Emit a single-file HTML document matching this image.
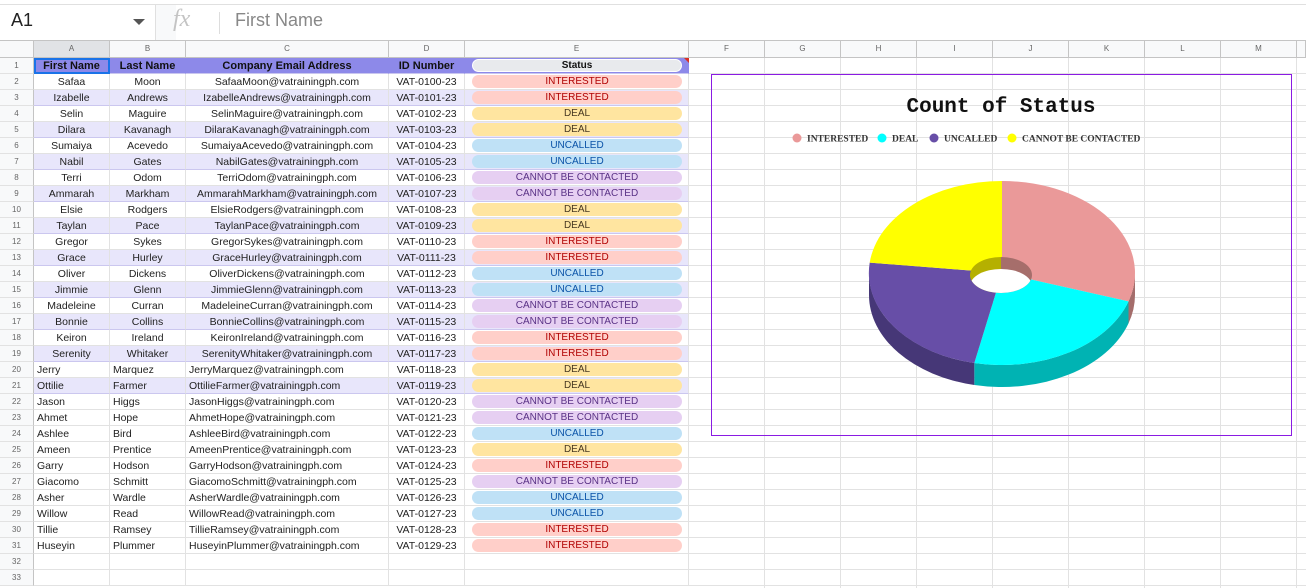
<!DOCTYPE html>
<html><head><meta charset="utf-8"><style>
*{box-sizing:border-box;margin:0;padding:0}
body{width:1306px;height:588px;overflow:hidden;background:#fff;font-family:"Liberation Sans",sans-serif;position:relative}
#top{position:absolute;left:0;width:1306px;border-top:1px solid #e0e0e0;border-bottom:1px solid #c4c4c4;top:4px;height:37px}
.r{position:absolute;left:0;display:flex;height:16px;width:689px}
.r>div{flex:none;border-right:1px solid #e2e2e2;border-bottom:1px solid #e2e2e2;font-size:10.5px;line-height:16px;white-space:nowrap;overflow:hidden;color:#222}
.n{width:34px;background:#f8f9fa;color:#666 !important;font-size:8px !important;text-align:center;border-right:1px solid #c4c4c4 !important}
.a{width:76px}.b{width:76px}.c{width:203px}.d{width:76px}.e{width:224px;padding:1px 6px 0 7px}.f{width:76px}.z{width:9px}
.ce>div.a,.ce>div.b,.ce>div.c{text-align:center}
.le>div.a,.le>div.b,.le>div.c{padding-left:3px}
.d{text-align:center}
.band>div:not(.n){background:#e8e6fb;border-bottom-color:#cbc7ef}
.p{height:13px;border-radius:7px;text-align:center;font-size:10px;line-height:13px}
.I{background:#ffcfc9;color:#b10202}
.D{background:#ffe5a0;color:#473821}
.U{background:#bfe1f6;color:#0a53a8}
.C{background:#e6cff2;color:#5a3286}
.hd{width:1306px}
.hd>div{background:#f8f9fa;color:#666;font-size:8px;text-align:center;border-bottom:1px solid #c4c4c4;border-right:1px solid #c4c4c4;line-height:16px}
.h1>div:not(.n){background:#8d89e9;font-weight:bold;font-size:11px;text-align:center;color:#111;border-right-color:#8d89e9;border-bottom-color:#c9c6ef}
</style></head><body>
<div id="top"></div>
<div style="position:absolute;left:11px;top:10px;font-size:18px;color:#222">A1</div>
<div style="position:absolute;left:133px;top:19px;width:0;height:0;border-left:6px solid transparent;border-right:6px solid transparent;border-top:6px solid #555"></div>
<div style="position:absolute;left:155px;top:5px;width:1px;height:35px;background:#e0e0e0"></div>
<div style="position:absolute;left:156px;top:5px;width:20px;height:35px;background:#f8f9fa"></div>
<div style="position:absolute;left:173px;top:6px;font-family:'Liberation Serif',serif;font-style:italic;font-size:24px;color:#c4c4c4">fx</div>
<div style="position:absolute;left:219px;top:12px;width:1px;height:22px;background:#ddd"></div>
<div style="position:absolute;left:235px;top:10px;font-size:18px;color:#888">First Name</div>

<!-- grid lines for F-M area -->
<div style="position:absolute;left:689px;top:58px;width:617px;height:530px;background:
repeating-linear-gradient(to bottom,transparent 0 15px,#e2e2e2 15px 16px),
repeating-linear-gradient(to right,transparent 0 75px,#e2e2e2 75px 76px)"></div>

<div class="r hd" style="top:41px;height:17px"><div class="n" style="border-bottom:1px solid #c4c4c4"></div><div class="a" style="background:#e1e3e6">A</div><div class="b">B</div><div class="c">C</div><div class="d">D</div><div class="e" style="padding:0">E</div><div class="f">F</div><div class="f">G</div><div class="f">H</div><div class="f">I</div><div class="f">J</div><div class="f">K</div><div class="f">L</div><div class="f">M</div><div class="z"></div></div>

<div class="r h1" style="top:58px"><div class="n">1</div><div class="a" style="outline:2px solid #1a73e8;outline-offset:-2px">First Name</div><div class="b">Last Name</div><div class="c">Company Email Address</div><div class="d">ID Number</div><div class="e"><div class="p" style="background:#e8eaed;width:210px;border:1px solid #fff;line-height:11px">Status</div></div></div>
<div style="position:absolute;left:684px;top:58px;width:0;height:0;border-left:5px solid transparent;border-top:5px solid #d93025"></div>

<div class="r ce" style="top:74px"><div class="n">2</div><div class="a">Safaa</div><div class="b">Moon</div><div class="c">SafaaMoon@vatrainingph.com</div><div class="d">VAT-0100-23</div><div class="e"><div class="p I">INTERESTED</div></div></div>
<div class="r ce band" style="top:90px"><div class="n">3</div><div class="a">Izabelle</div><div class="b">Andrews</div><div class="c">IzabelleAndrews@vatrainingph.com</div><div class="d">VAT-0101-23</div><div class="e"><div class="p I">INTERESTED</div></div></div>
<div class="r ce" style="top:106px"><div class="n">4</div><div class="a">Selin</div><div class="b">Maguire</div><div class="c">SelinMaguire@vatrainingph.com</div><div class="d">VAT-0102-23</div><div class="e"><div class="p D">DEAL</div></div></div>
<div class="r ce band" style="top:122px"><div class="n">5</div><div class="a">Dilara</div><div class="b">Kavanagh</div><div class="c">DilaraKavanagh@vatrainingph.com</div><div class="d">VAT-0103-23</div><div class="e"><div class="p D">DEAL</div></div></div>
<div class="r ce" style="top:138px"><div class="n">6</div><div class="a">Sumaiya</div><div class="b">Acevedo</div><div class="c">SumaiyaAcevedo@vatrainingph.com</div><div class="d">VAT-0104-23</div><div class="e"><div class="p U">UNCALLED</div></div></div>
<div class="r ce band" style="top:154px"><div class="n">7</div><div class="a">Nabil</div><div class="b">Gates</div><div class="c">NabilGates@vatrainingph.com</div><div class="d">VAT-0105-23</div><div class="e"><div class="p U">UNCALLED</div></div></div>
<div class="r ce" style="top:170px"><div class="n">8</div><div class="a">Terri</div><div class="b">Odom</div><div class="c">TerriOdom@vatrainingph.com</div><div class="d">VAT-0106-23</div><div class="e"><div class="p C">CANNOT BE CONTACTED</div></div></div>
<div class="r ce band" style="top:186px"><div class="n">9</div><div class="a">Ammarah</div><div class="b">Markham</div><div class="c">AmmarahMarkham@vatrainingph.com</div><div class="d">VAT-0107-23</div><div class="e"><div class="p C">CANNOT BE CONTACTED</div></div></div>
<div class="r ce" style="top:202px"><div class="n">10</div><div class="a">Elsie</div><div class="b">Rodgers</div><div class="c">ElsieRodgers@vatrainingph.com</div><div class="d">VAT-0108-23</div><div class="e"><div class="p D">DEAL</div></div></div>
<div class="r ce band" style="top:218px"><div class="n">11</div><div class="a">Taylan</div><div class="b">Pace</div><div class="c">TaylanPace@vatrainingph.com</div><div class="d">VAT-0109-23</div><div class="e"><div class="p D">DEAL</div></div></div>
<div class="r ce" style="top:234px"><div class="n">12</div><div class="a">Gregor</div><div class="b">Sykes</div><div class="c">GregorSykes@vatrainingph.com</div><div class="d">VAT-0110-23</div><div class="e"><div class="p I">INTERESTED</div></div></div>
<div class="r ce band" style="top:250px"><div class="n">13</div><div class="a">Grace</div><div class="b">Hurley</div><div class="c">GraceHurley@vatrainingph.com</div><div class="d">VAT-0111-23</div><div class="e"><div class="p I">INTERESTED</div></div></div>
<div class="r ce" style="top:266px"><div class="n">14</div><div class="a">Oliver</div><div class="b">Dickens</div><div class="c">OliverDickens@vatrainingph.com</div><div class="d">VAT-0112-23</div><div class="e"><div class="p U">UNCALLED</div></div></div>
<div class="r ce band" style="top:282px"><div class="n">15</div><div class="a">Jimmie</div><div class="b">Glenn</div><div class="c">JimmieGlenn@vatrainingph.com</div><div class="d">VAT-0113-23</div><div class="e"><div class="p U">UNCALLED</div></div></div>
<div class="r ce" style="top:298px"><div class="n">16</div><div class="a">Madeleine</div><div class="b">Curran</div><div class="c">MadeleineCurran@vatrainingph.com</div><div class="d">VAT-0114-23</div><div class="e"><div class="p C">CANNOT BE CONTACTED</div></div></div>
<div class="r ce band" style="top:314px"><div class="n">17</div><div class="a">Bonnie</div><div class="b">Collins</div><div class="c">BonnieCollins@vatrainingph.com</div><div class="d">VAT-0115-23</div><div class="e"><div class="p C">CANNOT BE CONTACTED</div></div></div>
<div class="r ce" style="top:330px"><div class="n">18</div><div class="a">Keiron</div><div class="b">Ireland</div><div class="c">KeironIreland@vatrainingph.com</div><div class="d">VAT-0116-23</div><div class="e"><div class="p I">INTERESTED</div></div></div>
<div class="r ce band" style="top:346px"><div class="n">19</div><div class="a">Serenity</div><div class="b">Whitaker</div><div class="c">SerenityWhitaker@vatrainingph.com</div><div class="d">VAT-0117-23</div><div class="e"><div class="p I">INTERESTED</div></div></div>
<div class="r le" style="top:362px"><div class="n">20</div><div class="a">Jerry</div><div class="b">Marquez</div><div class="c">JerryMarquez@vatrainingph.com</div><div class="d">VAT-0118-23</div><div class="e"><div class="p D">DEAL</div></div></div>
<div class="r le band" style="top:378px"><div class="n">21</div><div class="a">Ottilie</div><div class="b">Farmer</div><div class="c">OttilieFarmer@vatrainingph.com</div><div class="d">VAT-0119-23</div><div class="e"><div class="p D">DEAL</div></div></div>
<div class="r le" style="top:394px"><div class="n">22</div><div class="a">Jason</div><div class="b">Higgs</div><div class="c">JasonHiggs@vatrainingph.com</div><div class="d">VAT-0120-23</div><div class="e"><div class="p C">CANNOT BE CONTACTED</div></div></div>
<div class="r le" style="top:410px"><div class="n">23</div><div class="a">Ahmet</div><div class="b">Hope</div><div class="c">AhmetHope@vatrainingph.com</div><div class="d">VAT-0121-23</div><div class="e"><div class="p C">CANNOT BE CONTACTED</div></div></div>
<div class="r le" style="top:426px"><div class="n">24</div><div class="a">Ashlee</div><div class="b">Bird</div><div class="c">AshleeBird@vatrainingph.com</div><div class="d">VAT-0122-23</div><div class="e"><div class="p U">UNCALLED</div></div></div>
<div class="r le" style="top:442px"><div class="n">25</div><div class="a">Ameen</div><div class="b">Prentice</div><div class="c">AmeenPrentice@vatrainingph.com</div><div class="d">VAT-0123-23</div><div class="e"><div class="p D">DEAL</div></div></div>
<div class="r le" style="top:458px"><div class="n">26</div><div class="a">Garry</div><div class="b">Hodson</div><div class="c">GarryHodson@vatrainingph.com</div><div class="d">VAT-0124-23</div><div class="e"><div class="p I">INTERESTED</div></div></div>
<div class="r le" style="top:474px"><div class="n">27</div><div class="a">Giacomo</div><div class="b">Schmitt</div><div class="c">GiacomoSchmitt@vatrainingph.com</div><div class="d">VAT-0125-23</div><div class="e"><div class="p C">CANNOT BE CONTACTED</div></div></div>
<div class="r le" style="top:490px"><div class="n">28</div><div class="a">Asher</div><div class="b">Wardle</div><div class="c">AsherWardle@vatrainingph.com</div><div class="d">VAT-0126-23</div><div class="e"><div class="p U">UNCALLED</div></div></div>
<div class="r le" style="top:506px"><div class="n">29</div><div class="a">Willow</div><div class="b">Read</div><div class="c">WillowRead@vatrainingph.com</div><div class="d">VAT-0127-23</div><div class="e"><div class="p U">UNCALLED</div></div></div>
<div class="r le" style="top:522px"><div class="n">30</div><div class="a">Tillie</div><div class="b">Ramsey</div><div class="c">TillieRamsey@vatrainingph.com</div><div class="d">VAT-0128-23</div><div class="e"><div class="p I">INTERESTED</div></div></div>
<div class="r le" style="top:538px"><div class="n">31</div><div class="a">Huseyin</div><div class="b">Plummer</div><div class="c">HuseyinPlummer@vatrainingph.com</div><div class="d">VAT-0129-23</div><div class="e"><div class="p I">INTERESTED</div></div></div>
<div class="r le" style="top:554px"><div class="n">32</div><div class="a"></div><div class="b"></div><div class="c"></div><div class="d"></div><div class="e"></div></div>
<div class="r le" style="top:570px"><div class="n">33</div><div class="a"></div><div class="b"></div><div class="c"></div><div class="d"></div><div class="e"></div></div>

<svg style="position:absolute;left:0;top:0" width="1306" height="588">
<rect x="711.5" y="74.5" width="580" height="361" fill="none" stroke="#8a1be2" stroke-width="1"/>
<text x="1001" y="112" text-anchor="middle" font-family="Liberation Mono,monospace" font-weight="bold" font-size="21" fill="#111">Count of Status</text>
<g font-family="Liberation Serif,serif" font-weight="bold" font-size="9.5" fill="#333">
<circle cx="797" cy="138" r="4.5" fill="#ea9999"/><text x="807" y="141.5">INTERESTED</text>
<circle cx="882" cy="138" r="4.5" fill="#00ffff"/><text x="892" y="141.5">DEAL</text>
<circle cx="934" cy="138" r="4.5" fill="#674ea7"/><text x="944" y="141.5">UNCALLED</text>
<circle cx="1012" cy="138" r="4.5" fill="#ffff00"/><text x="1022" y="141.5">CANNOT BE CONTACTED</text>
</g>
<path d="M1135,273 A133,92 0 0 1 1128.5,301.4 L1128.5,323.4 A133,92 0 0 0 1135,295 Z" fill="#a46d6b"/>
<path d="M1128.5,301.4 A133,92 0 0 1 974.3,363 L974.3,385 A133,92 0 0 0 1128.5,323.4 Z" fill="#00b3b3"/>
<path d="M974.3,363 A133,92 0 0 1 869,273 L869,295 A133,92 0 0 0 974.3,385 Z" fill="#463777"/>
<path d="M1002,273 L1002,181 A133,92 0 0 1 1128.5,301.4 Z" fill="#ea9999"/>
<path d="M1002,273 L1128.5,301.4 A133,92 0 0 1 974.3,363 Z" fill="#00ffff"/>
<path d="M1002,273 L974.3,363 A133,92 0 0 1 869.7,262.6 Z" fill="#674ea7"/>
<path d="M1002,273 L869.7,262.6 A133,92 0 0 1 1002,181 Z" fill="#ffff00"/>
<clipPath id="h"><ellipse cx="1001" cy="275" rx="31" ry="18"/></clipPath>
<g clip-path="url(#h)">
<rect x="965" y="250" width="36" height="50" fill="#b5b000"/>
<rect x="1001" y="250" width="36" height="50" fill="#a66e6b"/>
<ellipse cx="1001" cy="286" rx="31" ry="17" fill="#fff"/>
</g>
</svg>
</body></html>
